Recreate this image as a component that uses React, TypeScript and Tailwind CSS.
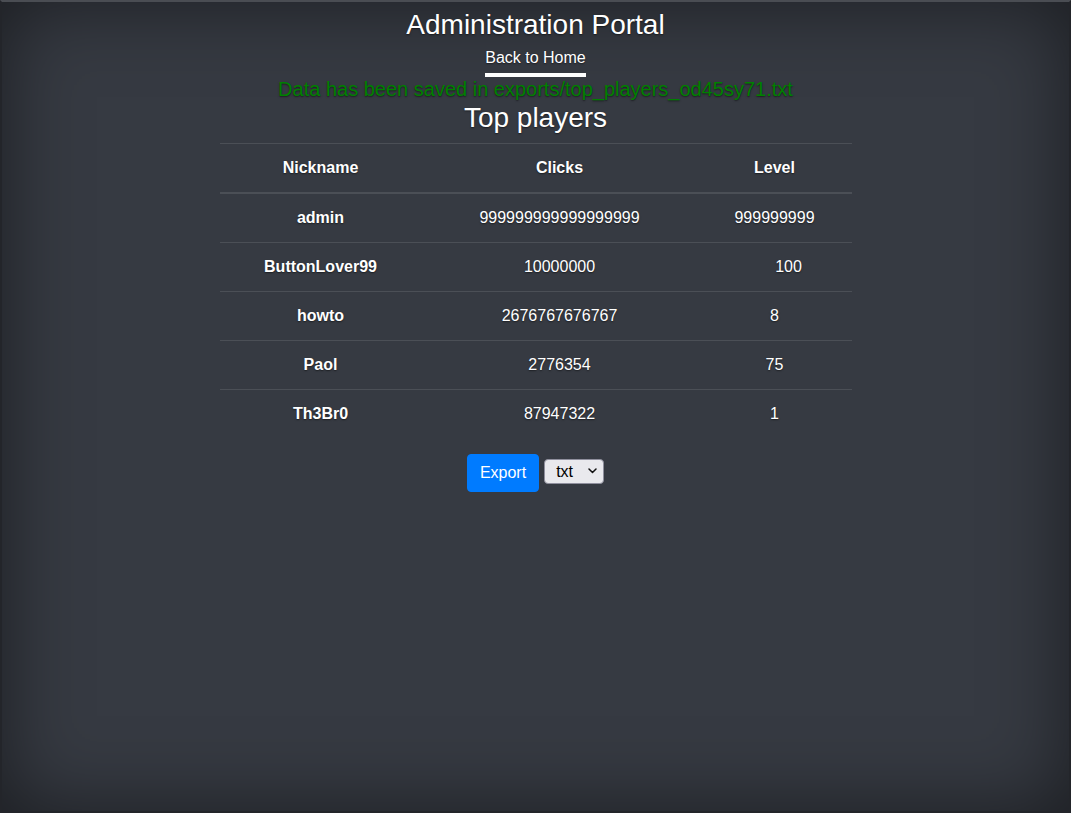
import React from "react";

const players = [
  { nick: "admin", clicks: "999999999999999999", level: "999999999", shift: false },
  { nick: "ButtonLover99", clicks: "10000000", level: "100", shift: true },
  { nick: "howto", clicks: "2676767676767", level: "8", shift: false },
  { nick: "Paol", clicks: "2776354", level: "75", shift: false },
  { nick: "Th3Br0", clicks: "87947322", level: "1", shift: false },
];

export default function App() {
  return (
    <div
      className="h-[813px] w-full overflow-hidden border-2 border-[#23252a] border-t-[#4a4d53] bg-[#363a42] text-white shadow-[inset_0_0_5rem_rgba(0,0,0,0.5)] [text-shadow:0_0.05rem_0.1rem_rgba(0,0,0,0.5)]"
      style={{ fontFamily: '"Liberation Sans", Arial, sans-serif' }}
    >
      <div className="flex flex-col items-center pt-[6px]">
        <h1 className="mb-[4px] text-[28px] font-normal leading-[1.2]">Administration Portal</h1>
        <nav>
          <a className="inline-block border-b-4 border-white pb-[3px] text-[16px] leading-6 text-white">
            Back to Home
          </a>
        </nav>
        <p className="text-[20px] leading-6 text-[#008000]">
          Data has been saved in exports/top_players_od45sy71.txt
        </p>
        <h2 className="mb-[9px] text-[28px] font-normal leading-[1.2]">Top players</h2>
        <table className="mb-4 w-[632px] border-collapse text-[16px] leading-6">
          <thead>
            <tr>
              <th className="w-[202px] border-t border-b-2 border-[#4b4f56] p-3 text-center font-bold">Nickname</th>
              <th className="w-[276px] border-t border-b-2 border-[#4b4f56] p-3 text-center font-bold">Clicks</th>
              <th className="w-[154px] border-t border-b-2 border-[#4b4f56] p-3 text-center font-bold">Level</th>
            </tr>
          </thead>
          <tbody>
            {players.map((p, i) => (
              <tr key={p.nick}>
                <th className={`${i === 0 ? "" : "border-t"} border-[#4b4f56] p-3 text-center font-bold`}>{p.nick}</th>
                <td className={`${i === 0 ? "" : "border-t"} border-[#4b4f56] p-3 text-center`}>{p.clicks}</td>
                <td
                  className={`${i === 0 ? "" : "border-t"} border-[#4b4f56] py-3 pr-3 text-center ${p.shift ? "pl-[40px]" : "pl-3"}`}
                >
                  {p.level}
                </td>
              </tr>
            ))}
          </tbody>
        </table>
        <div className="flex items-start gap-[5px]">
          <button className="h-[38px] rounded-[4px] border border-[#007bff] bg-[#007bff] px-3 text-[16px] leading-6 text-white">
            Export
          </button>
          <div className="relative mt-[5px]">
            <select
              defaultValue="txt"
              className="h-[25px] w-[60px] appearance-none rounded-[4px] border border-[#8f8f9d] bg-[#e9e9ed] pl-[11px] text-[16px] leading-none text-black [text-shadow:none]"
              style={{ fontFamily: '"Liberation Sans", Arial, sans-serif' }}
            >
              <option value="txt">txt</option>
              <option value="csv">csv</option>
              <option value="json">json</option>
            </select>
            <svg
              className="pointer-events-none absolute right-[7px] top-[9px]"
              width="9"
              height="6"
              viewBox="0 0 9 6"
              fill="none"
            >
              <path d="M1 1 L4.5 4.5 L8 1" stroke="#111" strokeWidth="1.5" strokeLinecap="round" strokeLinejoin="round" />
            </svg>
          </div>
        </div>
      </div>
    </div>
  );
}
